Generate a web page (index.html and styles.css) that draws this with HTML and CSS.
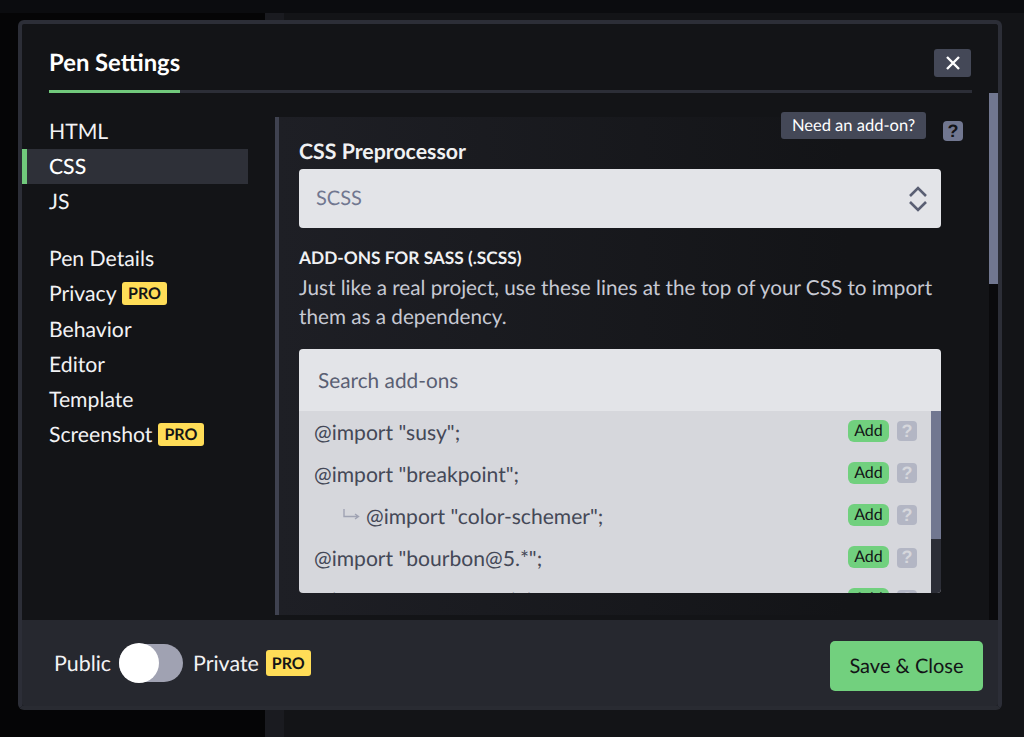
FILE: index.html
```html
<!DOCTYPE html>
<html lang="en">
<head>
<meta charset="utf-8">
<title>Pen Settings</title>
<link rel="stylesheet" href="styles.css">
</head>
<body>
<div class="backdrop">
  <div class="topbar"></div>
  <div class="panes">
    <div class="pane-left"></div>
    <div class="pane-divider"></div>
    <div class="pane-right"></div>
  </div>
</div>
<div class="modal">
  <header class="modal-head">
    <h1 class="modal-title">Pen Settings</h1>
    <button class="close" aria-label="Close">
      <svg class="close-icon" viewBox="0 0 14 14"><path d="M1 1l12 12M13 1L1 13"/></svg>
    </button>
  </header>
  <div class="modal-main">
    <nav class="side">
      <a class="side-item">HTML</a>
      <a class="side-item side-active">CSS</a>
      <a class="side-item">JS</a>
      <div class="side-gap"></div>
      <a class="side-item">Pen Details</a>
      <a class="side-item">Privacy <span class="pro">PRO</span></a>
      <a class="side-item">Behavior</a>
      <a class="side-item">Editor</a>
      <a class="side-item">Template</a>
      <a class="side-item">Screenshot <span class="pro">PRO</span></a>
    </nav>
    <section class="panel">
      <div class="need">Need an add-on?</div>
      <div class="help help-top">?</div>
      <h2 class="label">CSS Preprocessor</h2>
      <div class="select">
        <span>SCSS</span>
        <svg class="chev" viewBox="0 0 20 28"><path d="M2 11l8-8 8 8M2 17l8 8 8-8"/></svg>
      </div>
      <h3 class="addons-title">ADD-ONS FOR SASS (.SCSS)</h3>
      <p class="addons-text">Just like a real project, use these lines at the top of your CSS to import them as a dependency.</p>
      <div class="search">Search add-ons</div>
      <div class="list">
        <div class="rows">
          <div class="row"><span class="code">@import "susy";</span><span class="add">Add</span><span class="help help-row">?</span></div>
          <div class="row"><span class="code">@import "breakpoint";</span><span class="add">Add</span><span class="help help-row">?</span></div>
          <div class="row row-child">
            <svg class="sub" viewBox="0 0 17 11"><path d="M1 0v7.5h14M12 5l3.5 2.5L12 10"/></svg>
            <span class="code">@import "color-schemer";</span><span class="add">Add</span><span class="help help-row">?</span>
          </div>
          <div class="row"><span class="code">@import "bourbon@5.*";</span><span class="add">Add</span><span class="help help-row">?</span></div>
          <div class="row"><span class="code">@import "compass-mixins";</span><span class="add">Add</span><span class="help help-row">?</span></div>
        </div>
        <div class="list-track"><div class="list-thumb"></div></div>
      </div>
    </section>
    <div class="scroll-track"><div class="scroll-thumb"></div></div>
  </div>
  <footer class="modal-foot">
    <div class="privacy">
      <span>Public</span>
      <span class="toggle"><span class="knob"></span></span>
      <span>Private</span>
      <span class="pro">PRO</span>
    </div>
    <button class="save">Save &amp; Close</button>
  </footer>
</div>
</body>
</html>
```
FILE: styles.css
```css
* { box-sizing: border-box; }
html, body { margin: 0; height: 100%; }
body {
  background: #131417;
  font-family: Lato, "Liberation Sans", sans-serif;
  text-rendering: geometricPrecision;
  overflow: hidden;
  position: relative;
}
.backdrop { height: 100%; display: flex; flex-direction: column; }
.topbar { height: 13px; background: #0b0c0f; }
.panes { flex: 1; display: flex; }
.pane-left { width: 265px; background: #050506; }
.pane-divider { width: 19px; background: #1a1b20; }
.pane-right { flex: 1; background: #131417; }

.modal {
  position: absolute;
  left: 18px;
  top: 20px;
  width: 984px;
  height: 690px;
  border: 4px solid #2c2e37;
  border-bottom-color: #292b32;
  border-radius: 6px;
  background: #131417;
  display: flex;
  flex-direction: column;
  overflow: hidden;
}
.modal-head {
  height: 69px;
  flex: none;
  margin: 0 26px 0 27px;
  border-bottom: 3px solid #2c2e37;
  display: flex;
  justify-content: space-between;
  align-items: flex-start;
}
.modal-title {
  margin: 0;
  height: 69px;
  padding-top: 24px;
  border-bottom: 3px solid #71c97c;
  font-size: 23.8px;
  line-height: 30px;
  font-weight: 700;
  color: #fff;
}
.close {
  width: 37px;
  height: 28px;
  margin: 25px 1px 0 0;
  padding: 0;
  border: 0;
  border-radius: 3px;
  background: #444857;
  display: flex;
  align-items: center;
  justify-content: center;
}
.close-icon { width: 14px; height: 14px; fill: none; stroke: #fff; stroke-width: 2.4; }

.modal-main { flex: 1; min-height: 0; display: flex; }
.side { width: 226px; flex: none; padding-top: 21px; }
.side-item {
  height: 35.2px;
  padding-left: 27px;
  padding-bottom: 1px;
  display: flex;
  align-items: center;
  color: #f2f2f4;
  font-size: 21.2px;
  white-space: pre;
}
.side-active {
  background: #2e3038;
  border-left: 5px solid #71c97c;
  padding-left: 22px;
  font-weight: 500;
  color: #fff;
}
.side-gap { height: 21.5px; }
.pro {
  display: inline-block;
  height: 23px;
  padding: 0 6.5px;
  border-radius: 3px;
  background: #ffdd57;
  color: #131417;
  font-size: 16px;
  line-height: 24px;
  font-weight: 700;
}
.side-item .pro { margin-top: 1px; }

.panel {
  flex: 1;
  min-width: 0;
  margin: 24px 0 5px 27px;
  padding-left: 20px;
  border-left: 4px solid #3f4250;
  background: linear-gradient(to right, #1e1f25, #131417 80%);
  position: relative;
}
.need {
  position: absolute;
  left: 502px;
  top: -5px;
  width: 145px;
  height: 27px;
  border-radius: 3px;
  background: #444857;
  color: #fff;
  font-size: 16.5px;
  line-height: 26px;
  text-align: center;
}
.help {
  display: flex;
  align-items: center;
  justify-content: center;
  width: 20px;
  height: 20px;
  border-radius: 4px;
  font-family: "Liberation Sans", sans-serif;
  font-weight: 700;
  font-size: 18px;
}
.help-top {
  position: absolute;
  left: 664px;
  top: 4px;
  background: #717790;
  color: #131417;
}
.label {
  margin: 0;
  padding-top: 22px;
  height: 52px;
  font-size: 21.3px;
  line-height: 25px;
  font-weight: 700;
  color: #f0f1f3;
}
.select {
  width: 642px;
  height: 59px;
  padding: 0 13px 2px 17px;
  border-radius: 4px;
  background: #e3e4e8;
  color: #717790;
  font-size: 20px;
  display: flex;
  align-items: center;
  justify-content: space-between;
}
.chev { width: 20px; height: 28px; margin-top: 2px; fill: none; stroke: #5a5f73; stroke-width: 2.6; }
.addons-title {
  margin: 20px 0 0;
  font-size: 17.3px;
  line-height: 20px;
  font-weight: 700;
  color: #f0f1f3;
}
.addons-text {
  margin: 6px 0 17px;
  width: 642px;
  font-size: 20.7px;
  line-height: 29px;
  color: #c7c9d3;
}
.search {
  width: 642px;
  height: 62px;
  padding-left: 19px;
  border-radius: 4px 4px 0 0;
  background: #e3e4e8;
  color: #5a5f73;
  font-size: 20.8px;
  display: flex;
  align-items: center;
}
.list {
  width: 642px;
  height: 182px;
  border-radius: 0 0 4px 4px;
  background: #d6d7dc;
  display: flex;
  overflow: hidden;
}
.rows { flex: 1; min-width: 0; }
.row {
  height: 42.2px;
  padding: 0 14px 0 15px;
  display: flex;
  align-items: center;
  color: #444857;
}
.row-child { padding-left: 44px; }
.sub {
  width: 17px;
  height: 11px;
  margin-right: 6px;
  margin-top: -4px;
  fill: none;
  stroke: #a0a3b3;
  stroke-width: 1.4;
}
.code { flex: 1; font-size: 21.1px; }
.add {
  width: 41px;
  height: 22px;
  margin-right: 8px;
  margin-bottom: 3px;
  border-radius: 6px;
  background: #71d07e;
  color: #131417;
  font-size: 16px;
  line-height: 22px;
  text-align: center;
}
.help-row { background: #b3b6c4; color: #d6d7dc; margin-bottom: 2px; }
.list-track { width: 10px; flex: none; background: #2c2e37; }
.list-thumb { height: 128px; background: #717790; }

.scroll-track { width: 9px; flex: none; background: #0a0a0c; }
.scroll-thumb { height: 191px; background: #717790; }

.modal-foot {
  height: 86px;
  flex: none;
  background: #26282f;
  padding: 0 15px 0 32px;
  display: flex;
  align-items: center;
  justify-content: space-between;
}
.privacy {
  display: flex;
  align-items: center;
  color: #f2f2f4;
  font-size: 21.4px;
  margin-top: -1px;
}
.toggle {
  width: 64px;
  height: 38px;
  margin: 0 10px 0 8px;
  border-radius: 19px;
  background: #a0a2b2;
  position: relative;
}
.knob {
  position: absolute;
  left: 0;
  top: -1px;
  width: 40px;
  height: 40px;
  border-radius: 50%;
  background: #fff;
}
.privacy .pro { margin-left: 7px; height: 26px; line-height: 27px; padding: 0 6px; }
.save {
  width: 153px;
  height: 50px;
  padding: 0;
  border: 0;
  border-radius: 5px;
  background: #72d07e;
  color: #131417;
  font-family: Lato, "Liberation Sans", sans-serif;
  font-size: 20px;
  text-rendering: geometricPrecision;
  margin-top: 6px;
}
```
